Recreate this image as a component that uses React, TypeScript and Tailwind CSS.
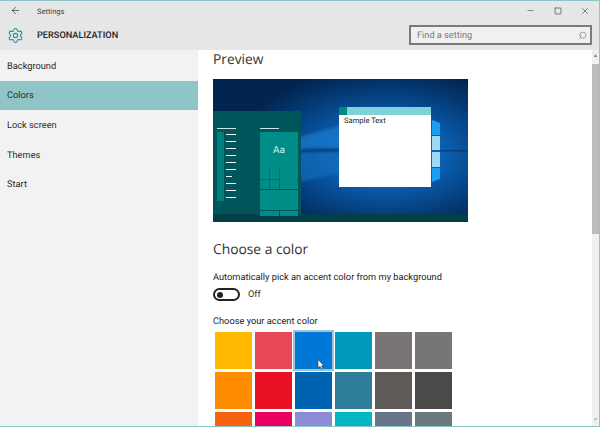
import { ArrowLeft, Minus, Search, Settings, Square, X } from "lucide-react";

const navItems = ["Background", "Colors", "Lock screen", "Themes", "Start"];

const swatches = [
  "bg-[#ffb900]", "bg-[#e74856]", "bg-[#0078d7]", "bg-[#0099bc]", "bg-[#7a7574]", "bg-[#767676]",
  "bg-[#ff8c00]", "bg-[#e81123]", "bg-[#0063b1]", "bg-[#2d7d9a]", "bg-[#5d5a58]", "bg-[#4c4a48]",
  "bg-[#f7630c]", "bg-[#ea005e]", "bg-[#8e8cd8]", "bg-[#00b7c3]", "bg-[#68768a]", "bg-[#69797e]",
];

function Wallpaper() {
  return (
    <svg className="absolute inset-0 w-full h-full" viewBox="0 0 255 143" preserveAspectRatio="none">
      <defs>
        <radialGradient id="glow" cx="0.68" cy="0.52" r="0.6">
          <stop offset="0" stopColor="#1583e0" />
          <stop offset="0.4" stopColor="#0a5cad" />
          <stop offset="0.75" stopColor="#043a75" />
          <stop offset="1" stopColor="#02244f" />
        </radialGradient>
        <filter id="soft" x="-20%" y="-20%" width="140%" height="140%">
          <feGaussianBlur stdDeviation="1.6" />
        </filter>
      </defs>
      <rect width="255" height="143" fill="url(#glow)" />
      <g filter="url(#soft)">
        <polygon points="86,58 127,47 127,68 86,70" fill="#1a78cc" opacity="0.75" />
        <polygon points="86,74 127,73 127,94 86,103" fill="#1570c0" opacity="0.6" />
        <rect x="86" y="70" width="45" height="2.5" fill="#03305f" />
      </g>
      <polygon points="219,41 227,44 227,56 219,56" fill="#1c9df0" />
      <polygon points="219,57 227,57 227,71 219,71" fill="#9fd8f3" />
      <polygon points="219,73 227,73 227,88 219,88" fill="#9fd8f3" />
      <polygon points="219,89 227,89 227,100 219,103" fill="#1c9df0" />
      <rect x="227" y="71" width="28" height="1.5" fill="#03305f" opacity="0.6" />
      <rect x="0" y="135" width="255" height="8" fill="#033f48" />
    </svg>
  );
}

function StartMenu() {
  return (
    <div className="absolute left-0 top-[32px] bottom-[8px] w-[88px] bg-[#00555a] flex pl-[4px] pt-[17px] gap-[24px]">
      <div className="w-[19px]">
        <div className="h-[1px] bg-[#cfe6e6]" />
        <div className="flex gap-[2px] mt-[3px]">
          <div className="w-[7px] h-[69px] bg-[#00807f]" />
          <div className="flex flex-col gap-[6px] pt-[2px]">
            {[10, 10, 10, 10, 10, 10, 6, 10, 10, 10].map((w, i) => (
              <div key={i} style={{ width: w }} className="h-[1px] bg-white" />
            ))}
          </div>
        </div>
      </div>
      <div className="w-[38px]">
        <div className="w-[19px] h-[1px] bg-[#cfe6e6]" />
        <div className="mt-[3px] h-[37px] bg-[#008d87] flex items-center justify-center text-[10px] text-[#d8f0ee]">Aa</div>
        <div className="grid grid-cols-[9px_9px_18px] grid-rows-[10px_9px] gap-px bg-[#006d6e] h-[20px]">
          <div className="bg-[#008d87]" />
          <div className="bg-[#008d87]" />
          <div className="bg-[#008d87] row-span-2" />
          <div className="bg-[#008d87]" />
          <div className="bg-[#008d87]" />
        </div>
        <div className="mt-px h-[20px] bg-[#008d87]" />
        <div className="mt-px grid grid-cols-2 gap-px h-[5px]">
          <div className="bg-[#008d87]" />
          <div className="bg-[#008d87]" />
        </div>
      </div>
    </div>
  );
}

function SampleWindow() {
  return (
    <div className="absolute left-[126px] top-[28px] w-[92px] h-[80px] bg-white flex flex-col">
      <div className="h-[8px] bg-[#7fd3d6] flex">
        <div className="w-[8px] bg-[#00897f]" />
      </div>
      <div className="pl-[5px] text-[7.6px] leading-[12px] text-[#222]">Sample Text</div>
    </div>
  );
}

export default function App() {
  return (
    <div className="w-[600px] h-[427px] overflow-hidden flex flex-col bg-white text-[#1f1f1f] border-t border-b border-r border-[#8fc5c7] [text-rendering:geometricPrecision] font-['Roboto','Noto_Sans',sans-serif]">
      <header className="h-[49px] bg-[#e6e6e6] shrink-0 flex flex-col">
        <div className="h-[24px] pb-[5px] flex items-center">
          <ArrowLeft className="w-[11px] h-[11px] ml-[10px] text-[#333]" strokeWidth={1.5} />
          <span className="ml-[16px] pt-[2px] text-[7.5px] text-[#444]">Settings</span>
          <div className="ml-auto flex items-center gap-[18.5px] pr-[9px] text-[#444]">
            <Minus className="w-[9px] h-[9px]" strokeWidth={1.5} />
            <Square className="w-[8px] h-[8px]" strokeWidth={2} />
            <X className="w-[10px] h-[10px]" strokeWidth={1.5} />
          </div>
        </div>
        <div className="h-[20px] flex items-center pr-[7px]">
          <Settings className="w-[17px] h-[17px] ml-[7px] text-[#1a8f96]" strokeWidth={1.5} />
          <span className="ml-[13px] pt-[2px] text-[9.2px] font-medium text-[#222]">PERSONALIZATION</span>
          <div className="ml-auto w-[183px] h-[20px] border-2 border-[#7b7b7b] bg-[#f0f0f0] flex items-center pl-[6px] pr-[3px] text-[9.2px] text-[#777]">
            <span className="pt-[1px]">Find a setting</span>
            <Search className="ml-auto w-[9px] h-[9px] -scale-x-100 text-[#888]" />
          </div>
        </div>
      </header>

      <div className="flex flex-1 min-h-0">
        <nav className="w-[198px] shrink-0 bg-[#f2f2f2] pt-[1px]">
          {navItems.map((item) => (
            <div
              key={item}
              className={`h-[29.6px] flex items-center pl-[7px] pt-[2px] text-[9.25px] text-[#2b2b2b] ${item === "Colors" ? "bg-[#8fc5c7]" : ""}`}
            >
              {item}
            </div>
          ))}
        </nav>

        <main className="flex-1 flex min-w-0">
          <div className="flex-1 pl-[15px] min-w-0">
            <h2 className="text-[13.8px] leading-[20px] font-['Open_Sans'] text-[#333]">Preview</h2>
            <div className="relative mt-[9px] w-[255px] h-[143px] overflow-hidden">
              <Wallpaper />
              <StartMenu />
              <SampleWindow />
            </div>
            <h2 className="mt-[18px] text-[13.8px] leading-[20px] font-['Open_Sans'] text-[#333]">Choose a color</h2>
            <p className="mt-[11px] text-[9.25px] leading-[13px] text-[#222]">Automatically pick an accent color from my background</p>
            <div className="mt-[4px] flex items-center gap-[8px]">
              <div className="w-[27px] h-[13px] rounded-full border-2 border-[#222] flex items-center pl-[2px]">
                <div className="w-[6px] h-[6px] rounded-full bg-[#222]" />
              </div>
              <span className="text-[9.25px] text-[#333]">Off</span>
            </div>
            <p className="mt-[13px] text-[9.25px] leading-[13px] text-[#222]">Choose your accent color</p>
            <div className="relative mt-[4px] ml-[2px] grid grid-cols-[repeat(6,37px)] auto-rows-[37px] gap-[3px]">
              {swatches.map((c, i) => (
                <div key={i} className={`${c} ${i === 2 ? "outline-2 outline-[#9ec4dc]" : ""}`} />
              ))}
              <svg className="absolute left-[102px] top-[27px] w-[8px] h-[11px]" viewBox="0 0 8 11">
                <path d="M1 0.5 V9 L3 7.3 L4.4 10.3 L5.8 9.7 L4.5 6.8 H7 Z" fill="#fff" stroke="#333" strokeWidth="0.6" />
              </svg>
            </div>
          </div>
          <div className="w-[7px] shrink-0 bg-[#f0f0f0] flex flex-col">
            <div className="h-[14px] flex items-center justify-center text-[5px] text-[#777]">▲</div>
            <div className="h-[170px] bg-[#bcbcbc]" />
            <div className="mt-auto h-[10px] flex items-center justify-center text-[5px] text-[#aaa]">▼</div>
          </div>
        </main>
      </div>
    </div>
  );
}
